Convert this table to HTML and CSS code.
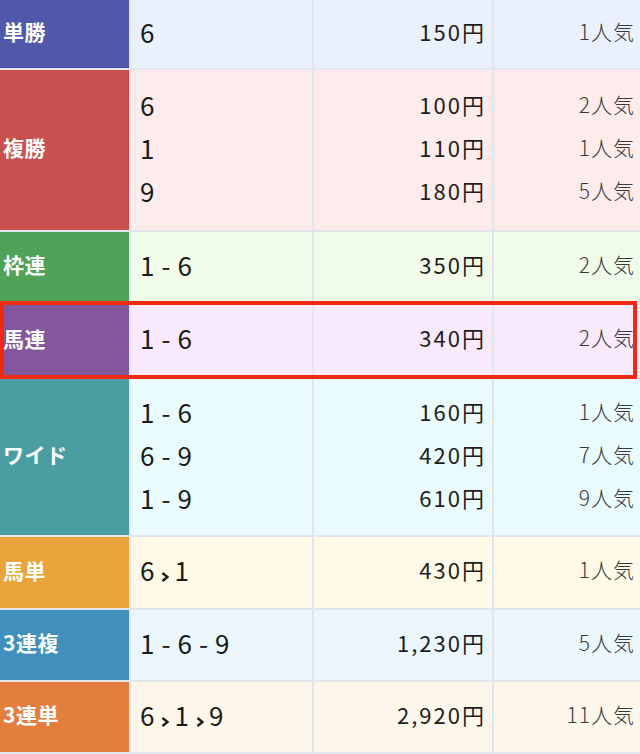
FILE: index.html
```html
<!DOCTYPE html>
<html lang="ja">
<head>
<meta charset="utf-8">
<title>払戻金</title>
<link rel="stylesheet" href="styles.css">
</head>
<body>
<div class="results">
  <div class="row r-tansho">
    <div class="label">単勝</div>
    <div class="nums"><div class="line">6</div></div>
    <div class="price"><div class="line">150円</div></div>
    <div class="pop"><div class="line">1人気</div></div>
  </div>
  <div class="row r-fukusho">
    <div class="label">複勝</div>
    <div class="nums"><div class="line">6</div><div class="line">1</div><div class="line">9</div></div>
    <div class="price"><div class="line">100円</div><div class="line">110円</div><div class="line">180円</div></div>
    <div class="pop"><div class="line">2人気</div><div class="line">1人気</div><div class="line">5人気</div></div>
  </div>
  <div class="row r-wakuren">
    <div class="label">枠連</div>
    <div class="nums"><div class="line">1<span class="dash">-</span>6</div></div>
    <div class="price"><div class="line">350円</div></div>
    <div class="pop"><div class="line">2人気</div></div>
  </div>
  <div class="row r-umaren highlight">
    <div class="label">馬連</div>
    <div class="nums"><div class="line">1<span class="dash">-</span>6</div></div>
    <div class="price"><div class="line">340円</div></div>
    <div class="pop"><div class="line">2人気</div></div>
  </div>
  <div class="row r-wide">
    <div class="label">ワイド</div>
    <div class="nums"><div class="line">1<span class="dash">-</span>6</div><div class="line">6<span class="dash">-</span>9</div><div class="line">1<span class="dash">-</span>9</div></div>
    <div class="price"><div class="line">160円</div><div class="line">420円</div><div class="line">610円</div></div>
    <div class="pop"><div class="line">1人気</div><div class="line">7人気</div><div class="line">9人気</div></div>
  </div>
  <div class="row r-umatan">
    <div class="label">馬単</div>
    <div class="nums"><div class="line">6<svg class="arrow" viewBox="0 0 8 10" width="8" height="10"><polyline points="1.5,1 6.5,5 1.5,9"/></svg>1</div></div>
    <div class="price"><div class="line">430円</div></div>
    <div class="pop"><div class="line">1人気</div></div>
  </div>
  <div class="row r-sanfuku">
    <div class="label">3連複</div>
    <div class="nums"><div class="line">1<span class="dash">-</span>6<span class="dash">-</span>9</div></div>
    <div class="price"><div class="line">1,230円</div></div>
    <div class="pop"><div class="line">5人気</div></div>
  </div>
  <div class="row r-santan">
    <div class="label">3連単</div>
    <div class="nums"><div class="line">6<svg class="arrow" viewBox="0 0 8 10" width="8" height="10"><polyline points="1.5,1 6.5,5 1.5,9"/></svg>1<svg class="arrow" viewBox="0 0 8 10" width="8" height="10"><polyline points="1.5,1 6.5,5 1.5,9"/></svg>9</div></div>
    <div class="price"><div class="line">2,920円</div></div>
    <div class="pop"><div class="line">11人気</div></div>
  </div>
</div>
</body>
</html>
```
FILE: styles.css
```css
html, body {
  margin: 0;
  padding: 0;
}
body {
  background: #e1e5ec;
  font-family: "Noto Sans CJK JP", "Noto Sans", sans-serif;
  width: 640px;
  height: 754px;
  overflow: hidden;
}
.results {
  display: flex;
  flex-direction: column;
  gap: 2px;
}
.row {
  display: grid;
  grid-template-columns: 129px 181px 178px 1fr;
  column-gap: 2px;
  height: 70px;
}
.row > div {
  display: flex;
  flex-direction: column;
  justify-content: center;
  box-sizing: border-box;
  padding-bottom: 6px;
}
.label {
  color: #fff;
  font-weight: bold;
  font-size: 21px;
  padding-left: 3px;
  letter-spacing: 0.5px;
}
.line {
  line-height: 43px;
  height: 43px;
}
.nums {
  padding-left: 9px;
  font-size: 26px;
  color: #1b1b1b;
}
.dash {
  display: inline-block;
  margin: 0 7px 0 7px;
}
.arrow {
  display: inline-block;
  margin: 0 5px 0 7px;
  vertical-align: -1px;
  fill: none;
  stroke: #1b1b1b;
  stroke-width: 2.4;
}
.price {
  text-align: right;
  padding-right: 6px;
  font-size: 22px;
  color: #1e1e1e;
  letter-spacing: 2px;
}
.pop {
  text-align: right;
  padding-right: 5px;
  font-size: 21px;
  color: #3a3a3a;
  font-weight: 300;
  letter-spacing: 1px;
}

.r-tansho { height: 68px; }
.r-tansho .label { background: #5058a9; box-shadow: inset 0 -1px 0 #3f47a0; }
.r-tansho > div:not(.label) { background: #eaf1fd; }

.r-fukusho { height: 160px; }
.r-fukusho .label { background: #c9504f; box-shadow: inset -1px 0 0 #d34040; }
.r-fukusho > div:not(.label) { background: #feecec; }

.r-wakuren .label { background: #4fa257; }
.r-wakuren > div:not(.label) { background: #f1fbe9; }

.r-umaren { height: 73px; }
.r-umaren .label { background: #84569b; }
.r-umaren > div:not(.label) { background: #f8e9fd; }

.r-wide { height: 156px; }
.r-wide .label { background: #4a9ea1; }
.r-wide > div:not(.label) { background: #eafbfd; }

.r-umatan { height: 71px; }
.r-umatan .label { background: #e8a43a; }
.r-umatan > div:not(.label) { background: #fffae7; }

.r-sanfuku .label { background: #418fbd; }
.r-sanfuku > div:not(.label) { background: #ebf6fd; }

.r-santan .label { background: #e47e3e; }
.r-santan > div:not(.label) { background: #fdf6eb; }

.highlight {
  position: relative;
}
.highlight::after {
  content: "";
  position: absolute;
  top: -3px;
  bottom: -2px;
  left: 0;
  right: 3px;
  border: 4px solid #ef2a12;
  pointer-events: none;
}
```
